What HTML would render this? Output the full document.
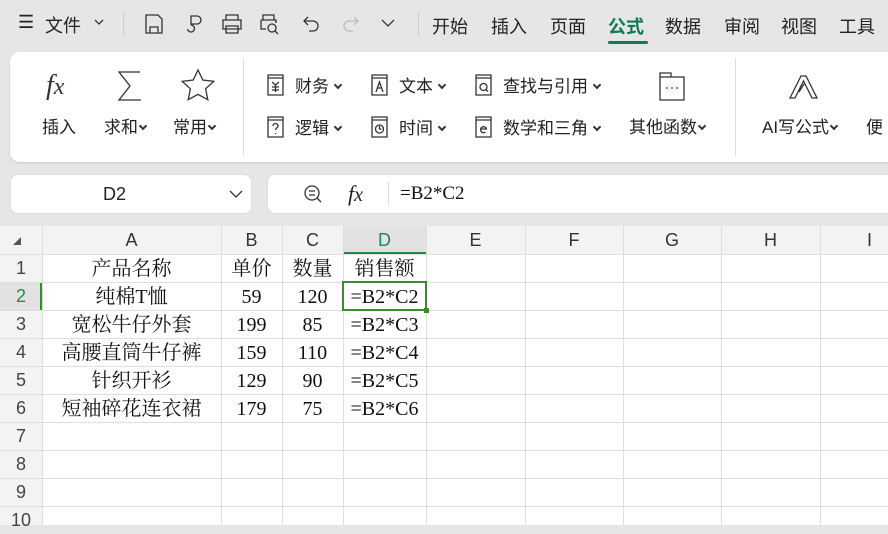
<!DOCTYPE html>
<html><head><meta charset="utf-8"><style>
*{margin:0;padding:0;box-sizing:border-box}
body{width:888px;height:525px;overflow:hidden;background:#e6e6e6;font-family:"Liberation Sans","Noto Sans CJK SC",sans-serif;color:#222;position:relative}
.a{position:absolute}
.t{font-size:18px;white-space:nowrap}
.v{display:inline-block;width:6px;height:6px;border-right:2px solid #333;border-bottom:2px solid #333;transform:rotate(45deg);margin:0 0 5px 6px;vertical-align:middle}
.sep{position:absolute;width:1px;background:#ccc}
.ribbon{left:10px;top:52px;width:900px;height:110px;background:#fff;border-radius:10px;box-shadow:0 1px 2px rgba(0,0,0,.12)}
.grid{left:0;top:226px;width:888px;height:299px;background:#fff}
.hl{position:absolute;left:0;width:888px;height:1px;background:#dedede}
.vl{position:absolute;top:0;width:1px;height:299px;background:#dedede}
.ch{position:absolute;top:0;height:28px;line-height:28px;text-align:center;font-size:18px;color:#333}
.rh{position:absolute;left:0;width:42px;height:28px;line-height:28px;text-align:center;font-size:18px;color:#444}
.c{position:absolute;height:28px;line-height:28px;text-align:center;font-family:"Liberation Serif","Noto Serif CJK SC",serif;font-size:20px;color:#111;white-space:nowrap}
svg{position:absolute;fill:none;stroke:#333;stroke-width:1.3}
</style></head><body>
<div class="a t" style="left:18px;top:12px">☰</div>
<div class="a t" style="left:45px;top:12px">文件</div>
<svg style="left:94px;top:19px" width="10" height="7"><path d="M1 1l4 4 4-4"/></svg>
<div class="sep" style="left:123px;top:12px;height:24px"></div>
<svg style="left:143px;top:12px" width="22" height="24"><path d="M3 3h12l4 4v14H3z M7 21v-6h8v6"/></svg>
<svg style="left:183px;top:12px" width="22" height="24"><path d="M8 13V4h6a4 4 0 010 8H8 M8 13a3.5 3.5 0 11-3.5 4"/></svg>
<svg style="left:220px;top:12px" width="24" height="24"><path d="M6 8V3h12v5 M3 8h18v9H3z M6 14h12v7H6z"/></svg>
<svg style="left:258px;top:12px" width="26" height="26"><path d="M5 8V3h11v5 M3 8h15v3 M3 8v9h5 M14 16m-4 0a4 4 0 108 0a4 4 0 10-8 0 M17 19l3 3"/></svg>
<svg style="left:300px;top:12px" width="22" height="24"><path d="M4 9h9a5 5 0 010 10H9 M8 5L4 9l4 4"/></svg>
<svg style="left:340px;top:12px" width="22" height="24"><path stroke="#bbb" d="M18 9H9a5 5 0 000 10h4 M14 5l4 4-4 4"/></svg>
<svg style="left:381px;top:19px" width="14" height="9"><path d="M1 1l6 6 6-6"/></svg>
<div class="sep" style="left:418px;top:12px;height:24px"></div>
<div class="a t" style="left:432px;top:13px">开始</div>
<div class="a t" style="left:491px;top:13px">插入</div>
<div class="a t" style="left:550px;top:13px">页面</div>
<div class="a t" style="left:608px;top:13px;color:#0f7a55;font-weight:bold">公式</div>
<div class="a" style="left:608px;top:41px;width:40px;height:3px;background:#0f7a55;border-radius:2px"></div>
<div class="a t" style="left:665px;top:13px">数据</div>
<div class="a t" style="left:724px;top:13px">审阅</div>
<div class="a t" style="left:781px;top:13px">视图</div>
<div class="a t" style="left:839px;top:13px">工具</div>
<div class="a ribbon"></div>
<div class="a" style="left:46px;top:70px;font-family:'Liberation Serif',serif;font-style:italic;font-size:28px;color:#333">f<span style="font-size:24px">x</span></div>
<svg style="left:116px;top:70px" width="28" height="32" stroke-width="1.5"><path d="M24 2H3l11 14L3 30h22"/></svg>
<svg style="left:180px;top:68px" width="36" height="34" stroke-width="1.5"><path d="M18 2l4.8 10 11 1.3-8.2 7.5 2.2 10.9L18 26.4 8.2 31.7l2.2-10.9L2.2 13.3l11-1.3z"/></svg>
<div class="a t" style="left:42px;top:113px;font-size:17px">插入</div>
<div class="a t" style="left:104px;top:113px;font-size:17px">求和<span class="v" style="margin-left:2px"></span></div>
<div class="a t" style="left:173px;top:113px;font-size:17px">常用<span class="v" style="margin-left:2px"></span></div>
<div class="sep" style="left:243px;top:58px;height:98px;background:#ddd"></div>
<svg style="left:266px;top:73px" width="20" height="24"><path d="M2 2h15v20H2z M2 5h15 M6 9l3.5 3 3.5-3 M9.5 12v7 M6 14h7 M6 17h7"/></svg>
<div class="a t" style="left:295px;top:72px;font-size:17px">财务<span class="v"></span></div>
<svg style="left:370px;top:73px" width="20" height="24"><path d="M2 2h15v20H2z M2 5h15 M6 19l3.5-10 3.5 10 M7 15h5"/></svg>
<div class="a t" style="left:399px;top:72px;font-size:17px">文本<span class="v"></span></div>
<svg style="left:474px;top:73px" width="20" height="24"><path d="M2 2h15v20H2z M2 5h15 M9.5 14m-3.5 0a3.5 3.5 0 107 0a3.5 3.5 0 10-7 0 M12 16.5l2 2"/></svg>
<div class="a t" style="left:503px;top:72px;font-size:17px">查找与引用<span class="v"></span></div>
<svg style="left:658px;top:70px" width="28" height="32"><path d="M2 3h11v4h13v23H2z M2 7h11"/><circle cx="9" cy="18" r="1" fill="#2b66e6" stroke="none"/><circle cx="14" cy="18" r="1" fill="#2b66e6" stroke="none"/><circle cx="19" cy="18" r="1" fill="#2b66e6" stroke="none"/></svg>
<svg style="left:266px;top:115px" width="20" height="24"><path d="M2 2h15v20H2z M2 5h15 M7 11a2.5 2.5 0 115 0c0 2-2.5 2-2.5 4 M9.5 18v1"/></svg>
<div class="a t" style="left:295px;top:114px;font-size:17px">逻辑<span class="v"></span></div>
<svg style="left:370px;top:115px" width="20" height="24"><path d="M2 2h15v20H2z M2 5h15 M9.5 14m-4 0a4 4 0 108 0a4 4 0 10-8 0 M9.5 11v3h2"/></svg>
<div class="a t" style="left:399px;top:114px;font-size:17px">时间<span class="v"></span></div>
<svg style="left:474px;top:115px" width="20" height="24"><path d="M2 2h15v20H2z M2 5h15 M6.5 14h6a3 3 0 10-1 3"/></svg>
<div class="a t" style="left:503px;top:114px;font-size:17px">数学和三角<span class="v"></span></div>
<div class="a t" style="left:629px;top:113px;font-size:17px">其他函数<span class="v" style="margin-left:2px"></span></div>
<div class="sep" style="left:735px;top:58px;height:98px;background:#ddd"></div>
<svg style="left:788px;top:72px" width="36" height="28" stroke-width="1.4"><path d="M2 26L13 4h5L29 26h-5L15.5 9 7 26z M11 20l5-8"/></svg>
<div class="a t" style="left:762px;top:113px;font-size:17px">AI写公式<span class="v" style="margin-left:2px"></span></div>
<div class="a t" style="left:866px;top:113px;font-size:17px">便</div>
<div class="a" style="left:10px;top:174px;width:242px;height:40px;background:#fff;border-radius:8px;border:1px solid #ddd"></div>
<div class="a t" style="left:103px;top:184px">D2</div>
<svg style="left:229px;top:190px" width="14" height="9"><path d="M1 1l6 6 6-6"/></svg>
<div class="a" style="left:267px;top:174px;width:640px;height:40px;background:#fff;border-radius:8px;border:1px solid #ddd"></div>
<svg style="left:302px;top:183px" width="22" height="22" stroke-width="1.5"><circle cx="10" cy="10" r="7"/><path d="M7 8h6M7 12h6M15 15l4 4"/></svg>
<div class="a" style="left:348px;top:181px;font-family:'Liberation Serif',serif;font-style:italic;font-size:22px">f<span style="font-size:20px">x</span></div>
<div class="sep" style="left:388px;top:182px;height:24px;background:#ddd"></div>
<div class="a" style="left:400px;top:183px;font-family:'Liberation Serif',serif;font-size:19px;color:#111">=B2*C2</div>
<div class="a grid">
 <div class="a" style="left:0;top:0;width:888px;height:28px;background:#f3f3f3"></div>
 <div class="a" style="left:0;top:28px;width:42px;height:271px;background:#f3f3f3"></div>
 <div class="a" style="left:343px;top:0;width:83px;height:28px;background:#e2e2e2;border-bottom:2px solid #1f8a4c"></div>
 <div class="a" style="left:0;top:56px;width:42px;height:28px;background:#e2e2e2;border-right:2px solid #3c8a2e"></div>
 <svg style="left:12px;top:10px;stroke:none;fill:#555" width="10" height="10"><path d="M9 1v8H1z"/></svg>
 <div class="hl" style="top:28px"></div><div class="hl" style="top:56px"></div><div class="hl" style="top:84px"></div><div class="hl" style="top:112px"></div><div class="hl" style="top:140px"></div><div class="hl" style="top:168px"></div><div class="hl" style="top:196px"></div><div class="hl" style="top:224px"></div><div class="hl" style="top:252px"></div><div class="hl" style="top:280px"></div>
 <div class="vl" style="left:42px"></div><div class="vl" style="left:221px"></div><div class="vl" style="left:282px"></div><div class="vl" style="left:343px"></div><div class="vl" style="left:426px"></div><div class="vl" style="left:525px"></div><div class="vl" style="left:623px"></div><div class="vl" style="left:721px"></div><div class="vl" style="left:820px"></div>
 <div class="ch" style="left:42px;width:179px">A</div><div class="ch" style="left:221px;width:61px">B</div><div class="ch" style="left:282px;width:61px">C</div><div class="ch" style="left:343px;width:83px;color:#1f8a4c">D</div><div class="ch" style="left:426px;width:99px">E</div><div class="ch" style="left:525px;width:98px">F</div><div class="ch" style="left:623px;width:98px">G</div><div class="ch" style="left:721px;width:99px">H</div><div class="ch" style="left:820px;width:99px">I</div>
 <div class="rh" style="top:28px">1</div><div class="rh" style="top:56px;color:#1f8a4c">2</div><div class="rh" style="top:84px">3</div><div class="rh" style="top:112px">4</div><div class="rh" style="top:140px">5</div><div class="rh" style="top:168px">6</div><div class="rh" style="top:196px">7</div><div class="rh" style="top:224px">8</div><div class="rh" style="top:252px">9</div><div class="rh" style="top:280px">10</div>
 <div class="c" style="left:42px;width:179px;top:29px">产品名称</div><div class="c" style="left:221px;width:61px;top:29px">单价</div><div class="c" style="left:282px;width:61px;top:29px">数量</div><div class="c" style="left:343px;width:83px;top:29px">销售额</div>
 <div class="c" style="left:42px;width:179px;top:57px">纯棉T恤</div><div class="c" style="left:221px;width:61px;top:57px">59</div><div class="c" style="left:282px;width:61px;top:57px">120</div><div class="c" style="left:343px;width:83px;top:57px">=B2*C2</div>
 <div class="c" style="left:42px;width:179px;top:85px">宽松牛仔外套</div><div class="c" style="left:221px;width:61px;top:85px">199</div><div class="c" style="left:282px;width:61px;top:85px">85</div><div class="c" style="left:343px;width:83px;top:85px">=B2*C3</div>
 <div class="c" style="left:42px;width:179px;top:113px">高腰直筒牛仔裤</div><div class="c" style="left:221px;width:61px;top:113px">159</div><div class="c" style="left:282px;width:61px;top:113px">110</div><div class="c" style="left:343px;width:83px;top:113px">=B2*C4</div>
 <div class="c" style="left:42px;width:179px;top:141px">针织开衫</div><div class="c" style="left:221px;width:61px;top:141px">129</div><div class="c" style="left:282px;width:61px;top:141px">90</div><div class="c" style="left:343px;width:83px;top:141px">=B2*C5</div>
 <div class="c" style="left:42px;width:179px;top:169px">短袖碎花连衣裙</div><div class="c" style="left:221px;width:61px;top:169px">179</div><div class="c" style="left:282px;width:61px;top:169px">75</div><div class="c" style="left:343px;width:83px;top:169px">=B2*C6</div>
 <div class="a" style="left:342px;top:55px;width:85px;height:30px;border:2px solid #3c8a2e"></div>
 <div class="a" style="left:424px;top:82px;width:5px;height:5px;background:#3c8a2e"></div>
</div>
</body></html>
